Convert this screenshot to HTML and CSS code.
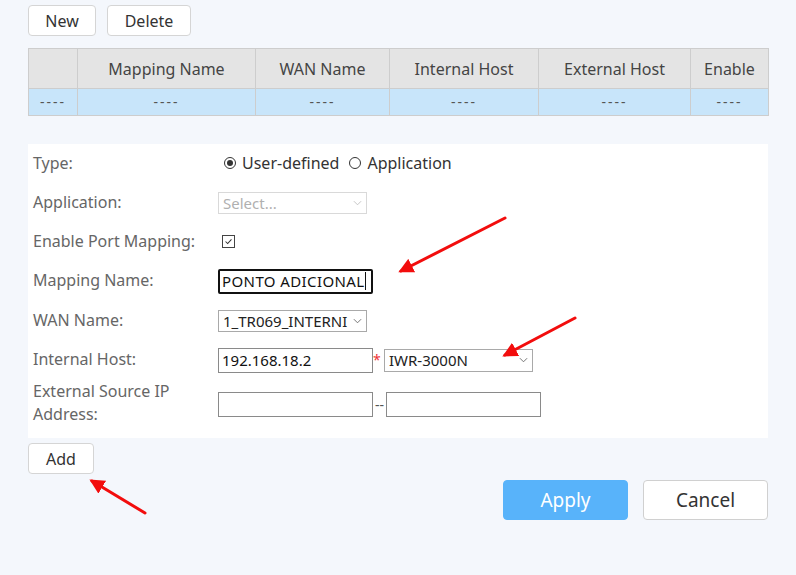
FILE: index.html
```html
<!DOCTYPE html>
<html>
<head>
<meta charset="utf-8">
<link rel="stylesheet" href="styles.css">
</head>
<body>
<div class="page">
  <div class="toolbar">
    <button class="btn">New</button>
    <button class="btn btn-delete">Delete</button>
  </div>
  <table class="grid">
    <colgroup>
      <col class="c1"><col class="c2"><col class="c3"><col class="c4"><col class="c5"><col class="c6">
    </colgroup>
    <thead>
      <tr><th></th><th>Mapping Name</th><th>WAN Name</th><th>Internal Host</th><th>External Host</th><th>Enable</th></tr>
    </thead>
    <tbody>
      <tr><td>----</td><td>----</td><td>----</td><td>----</td><td>----</td><td>----</td></tr>
    </tbody>
  </table>

  <div class="panel">
    <div class="row">
      <div class="label">Type:</div>
      <div class="field radios">
        <span class="radio checked"></span><span class="rtext">User-defined</span>
        <span class="radio"></span><span class="rtext">Application</span>
      </div>
    </div>
    <div class="row">
      <div class="label">Application:</div>
      <div class="field"><div class="select disabled"><span>Select...</span><svg class="chev" viewBox="0 0 10 6"><path d="M1 1l4 4 4-4" fill="none" stroke="currentColor" stroke-width="1"/></svg></div></div>
    </div>
    <div class="row">
      <div class="label">Enable Port Mapping:</div>
      <div class="field"><span class="check"><svg viewBox="0 0 13 13"><path d="M3 6.5l2.5 2.5 4.5-5" fill="none" stroke="#333" stroke-width="1.2"/></svg></span></div>
    </div>
    <div class="row r40">
      <div class="label">Mapping Name:</div>
      <div class="field"><div class="input focused"><span class="val">PONTO ADICIONAL</span><span class="caret"></span></div></div>
    </div>
    <div class="row">
      <div class="label">WAN Name:</div>
      <div class="field"><div class="select"><span>1_TR069_INTERNI</span><svg class="chev" viewBox="0 0 10 6"><path d="M1 1l4 4 4-4" fill="none" stroke="currentColor" stroke-width="1"/></svg></div></div>
    </div>
    <div class="row r40">
      <div class="label">Internal Host:</div>
      <div class="field">
        <div class="input">192.168.18.2</div><span class="req">*</span>
        <div class="select wide"><span>IWR-3000N</span><svg class="chev" viewBox="0 0 10 6"><path d="M1 1l4 4 4-4" fill="none" stroke="currentColor" stroke-width="1"/></svg></div>
      </div>
    </div>
    <div class="row ext">
      <div class="label two">External Source IP<br>Address:</div>
      <div class="field">
        <div class="input"></div><span class="dash">--</span><div class="input"></div>
      </div>
    </div>
  </div>

  <button class="btn btn-add">Add</button>

  <div class="actions">
    <button class="btn-apply">Apply</button>
    <button class="btn-cancel">Cancel</button>
  </div>
</div>

<svg class="arrows" width="796" height="575" viewBox="0 0 796 575">
  <defs>
    <marker id="ah" viewBox="0 0 10 10" refX="8" refY="5" markerWidth="5" markerHeight="5" orient="auto">
      <path d="M0 0L10 5L0 10z" fill="#f20d0d"/>
    </marker>
  </defs>
  <line x1="505" y1="218" x2="401" y2="271" stroke="#f20d0d" stroke-width="3" stroke-linecap="round" marker-end="url(#ah)"/>
  <line x1="575" y1="318" x2="505" y2="355" stroke="#f20d0d" stroke-width="3" stroke-linecap="round" marker-end="url(#ah)"/>
  <line x1="145" y1="513" x2="92" y2="481" stroke="#f20d0d" stroke-width="3" stroke-linecap="round" marker-end="url(#ah)"/>
</svg>
</body>
</html>
```

FILE: styles.css
```css
* { box-sizing: border-box; }
html, body { margin: 0; padding: 0; }
body {
  background: #f4f7fc;
  font-family: "Noto Sans", "Open Sans", sans-serif;
  color: #333;
  width: 796px;
  height: 575px;
  overflow: hidden;
  position: relative;
}
.page { padding: 5px 28px 0 28px; }
.toolbar { display: flex; gap: 11px; height: 31px; }
.btn {
  font-family: inherit;
  font-size: 16px;
  color: #333;
  background: #fff;
  border: 1px solid #d5d5d5;
  border-radius: 4px;
  height: 31px;
  padding: 0;
  width: 68px;
}
.btn-delete { width: 84px; }
.grid {
  margin-top: 12px;
  width: 740px;
  border-collapse: collapse;
  table-layout: fixed;
  font-size: 16px;
}
.c1 { width: 49px; }
.c2 { width: 178px; }
.c3 { width: 134px; }
.c4 { width: 149px; }
.c5 { width: 152px; }
.c6 { width: 78px; }
.grid th, .grid td {
  border: 1px solid #cdcdcd;
  text-align: center;
  padding: 0;
  font-weight: normal;
}
.grid th { background: #e4e4e4; height: 40px; color: #444; line-height: 36px; }
.grid td { background: #c8e5fa; height: 27px; color: #555; font-size: 14px; letter-spacing: 2px; line-height: 24px; }
.panel {
  margin-top: 28px;
  background: #fff;
  padding-bottom: 10px;
  font-size: 16px;
  color: #666;
}
.row { display: flex; align-items: center; height: 39px; }
.row.r40 { height: 40px; }
.row.ext { height: 48px; }
.label { width: 190px; padding-left: 5px; flex: none; line-height: 20px; margin-top: -2px; }
.label.two { line-height: 23px; }
.field { display: flex; align-items: center; color: #333; }
.radios { padding-left: 6px; font-size: 16px; color: #333; margin-top: -2px; }
.radio {
  width: 12px; height: 12px; border: 1px solid #333; border-radius: 50%;
  display: inline-flex; align-items: center; justify-content: center; margin-right: 6px;
}
.radio.checked::after { content: ""; width: 6px; height: 6px; border-radius: 50%; background: #333; }
.rtext { margin-right: 10px; }
.select {
  width: 149px; height: 22px; border: 1px solid #a9a9a9; background: #fff;
  display: flex; align-items: center; justify-content: space-between;
  padding: 0 4px 0 4px; font-size: 15px; color: #222; white-space: nowrap;
}
.select.disabled { border-color: #d9d9d9; color: #b0b0b0; }
.select.wide { height: 23px; margin-left: 4px; }
.chev { width: 9px; height: 6px; color: #666; }
.select.disabled .chev { color: #c0c0c0; }
.check {
  margin-left: 4px; width: 13px; height: 13px; border: 1px solid #444; display: inline-block;
}
.check svg { display: block; width: 11px; height: 11px; }
.input {
  width: 155px; height: 25px; border: 1px solid #8a8a8a; background: #fff;
  font-size: 15px; color: #111; padding: 0 3px; display: flex; align-items: center;
  white-space: nowrap; overflow: hidden; flex: none;
}
.input.focused { border: 2px solid #111; border-radius: 2px; height: 25px; padding: 0 2px; }
.val { font-size: 15px; letter-spacing: 0.4px; }
.caret { display: inline-block; width: 1px; height: 18px; background: #111; flex: none; }
.req { color: #e33; font-size: 14px; width: 7px; text-align: center; align-self: flex-start; margin-top: 2px; }
.dash { width: 13px; text-align: center; color: #555; font-size: 14px; }
.ext .input { width: 155px; height: 25px; }
.btn-add { display: block; margin-top: 5px; width: 66px; height: 31px; }
.actions { display: flex; justify-content: flex-end; gap: 15px; margin-top: 6px; }
.btn-apply, .btn-cancel {
  width: 125px; height: 40px; border-radius: 4px; font-family: inherit; font-size: 19px; padding: 0;
}
.btn-apply { background: #58b3fa; border: 1px solid #58b3fa; color: #fff; }
.btn-cancel { background: #fff; border: 1px solid #d0d0d0; color: #333; }
.arrows { position: absolute; left: 0; top: 0; pointer-events: none; }
```
